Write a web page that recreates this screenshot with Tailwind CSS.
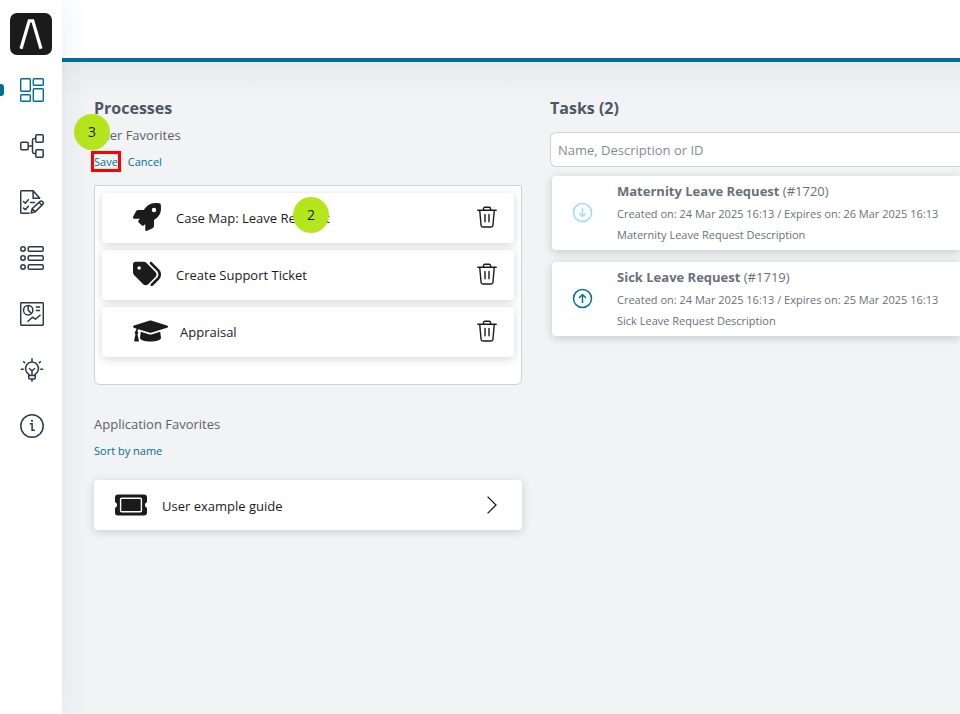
<!DOCTYPE html>
<html lang="en">
<head>
    <meta charset="UTF-8">
    <meta name="viewport" content="width=device-width, initial-scale=1.0">
    <title>Dashboard</title>
    <script src="https://cdn.jsdelivr.net/npm/@tailwindcss/browser@4"></script>
</head>
<body class="flex min-h-screen overflow-x-hidden bg-[#f2f3f5] font-['Open_Sans','Noto_Sans',sans-serif] text-[13px] text-[#1b1b1b]">
    <svg class="hidden">
        <symbol id="trash" viewBox="0 0 20 22">
            <g fill="none" stroke="currentColor" stroke-width="1.4" stroke-linecap="round" stroke-linejoin="round">
                <path d="M.8 4.2h18.4M2.7 4.2l1.4 15.3a1.6 1.6 0 0 0 1.6 1.5h8.6a1.6 1.6 0 0 0 1.6-1.5l1.4-15.3M6.5 4V2.6A1.3 1.3 0 0 1 7.8 1.3h4.4a1.3 1.3 0 0 1 1.3 1.3V4M8 8.5v7.3M12 8.5v7.3"/>
            </g>
        </symbol>
    </svg>

    <!-- Sidebar -->
    <nav class="z-10 flex w-[62px] shrink-0 flex-col items-center bg-white pt-[13px] shadow-[0_0_32px_rgba(30,70,110,0.09)]">
        <a href="#" aria-label="Home" class="mr-px mb-[23px] block">
            <svg class="size-[42px]" viewBox="0 0 42 42">
                <rect width="42" height="42" rx="7" fill="#1b1b1b"/>
                <path d="M11 35.7 19.200 7.800h3.600l8.200 27.900" fill="none" stroke="#fff" stroke-width="3.2"/>
            </svg>
        </a>
        <div class="flex w-full flex-col items-center gap-8 pl-[2px] text-[#2d3748]">
            <a href="#" aria-label="Dashboard" class="relative flex w-full justify-center text-[#006f94]">
                <span class="absolute top-1.5 -left-[2px] h-3 w-1 rounded-r-[3px] bg-[#006f94]"></span>
                <svg class="size-6" viewBox="0 0 24 24" fill="none" stroke="currentColor" stroke-width="1.4">
                    <rect x=".7" y=".7" width="9.6" height="12.6" rx=".8"/>
                    <rect x="13.3" y=".7" width="10" height="6.6" rx=".8"/>
                    <rect x=".7" y="16.7" width="9.6" height="6.6" rx=".8"/>
                    <rect x="13.3" y="10.7" width="10" height="12.6" rx=".8"/>
                </svg>
            </a>
            <a href="#" aria-label="Processes">
                <svg class="size-6" viewBox="0 0 24 24" fill="none" stroke="currentColor" stroke-width="1.5">
                    <rect x=".8" y="8.3" width="7.4" height="7.4" rx="1"/>
                    <rect x="15.8" y=".8" width="7.4" height="7.4" rx="1"/>
                    <rect x="15.8" y="15.8" width="7.4" height="7.4" rx="1"/>
                    <path d="M8.2 12h4.3M15.8 4.5h-1.6a1.7 1.7 0 0 0-1.7 1.7v11.6a1.7 1.7 0 0 0 1.7 1.7h1.6"/>
                </svg>
            </a>
            <a href="#" aria-label="Tasks">
                <svg class="size-6" viewBox="0 0 24 24" fill="none" stroke="currentColor" stroke-width="1.5" stroke-linejoin="round" stroke-linecap="round">
                    <path d="M9 23.2H1.7a1 1 0 0 1-1-1V1.7a1 1 0 0 1 1-1h11.4l6.6 7.6h-6.6V.7M3.500 11.500l1.800 1.800 3-3.600M3.500 18l1.800 1.800 3-3.600M10.500 12.500h4"/>
                    <path d="m11.2 23 .9-4.2 7.7-7.2a2 2 0 0 1 2.8.1 2 2 0 0 1 0 2.8l-7.5 7.4zM12.3 18.8l2.8 3M19 12.3l2.8 2.9"/>
                </svg>
            </a>
            <a href="#" aria-label="Cases">
                <svg class="size-6" viewBox="0 0 24 24" fill="none" stroke="currentColor" stroke-width="1.5">
                    <circle cx="3" cy="3" r="2.2"/><rect x="8.2" y=".8" width="15" height="4.4" rx="1.2"/>
                    <circle cx="3" cy="12" r="2.2"/><rect x="8.2" y="9.8" width="15" height="4.4" rx="1.2"/>
                    <circle cx="3" cy="21" r="2.2"/><rect x="8.2" y="18.8" width="15" height="4.4" rx="1.2"/>
                </svg>
            </a>
            <a href="#" aria-label="Statistics">
                <svg class="size-6" viewBox="0 0 24 24" fill="none" stroke="currentColor" stroke-width="1.5" stroke-linejoin="round">
                    <rect x=".7" y=".7" width="22.6" height="22.6" rx="1"/>
                    <circle cx="8.2" cy="8.2" r="4.7"/>
                    <path d="M8.2 3.5v4.7l3.4 3.4M15.8 5h4.4M15.8 8.5h4.4M7.5 19.8l5-4.6 3 2 5-4.4"/>
                </svg>
            </a>
            <a href="#" aria-label="Ideas">
                <svg class="size-6" viewBox="0 0 24 24" fill="none" stroke="currentColor" stroke-width="1.5">
                    <path d="M9 17.5v-1.200a6.500 6.500 0 1 1 6 0v1.200zM8.700 17.500h6.600v2.200a1.400 1.400 0 0 1-1.400 1.400h-3.800a1.400 1.400 0 0 1-1.400-1.400zM12 21v2.800M12 17.300v-4.800M9 10.200l3 2.600 3-2.600M12 .3v2.900M.8 11.200h3M20.200 11.200h3M3.200 3.200l1.900 2M20.800 3.200l-1.900 2"/>
                </svg>
            </a>
            <a href="#" aria-label="About">
                <svg class="size-6" viewBox="0 0 24 24" fill="none" stroke="currentColor" stroke-width="1.5">
                    <circle cx="12" cy="12" r="11.2"/>
                    <path d="M9.800 9.800h2.300v6.400h2.700"/>
                    <circle cx="12" cy="6.800" r="1.100" fill="currentColor" stroke="none"/>
                </svg>
            </a>
        </div>
    </nav>

    <div class="flex min-w-0 flex-1 flex-col">
        <header class="h-[62px] shrink-0 border-b-4 border-[#006f94] bg-white"></header>

        <main class="flex flex-1 gap-7 bg-linear-to-b from-[#e9ebee] to-[#f2f3f5] to-[40px] pt-8 pl-8">
            <!-- Processes -->
            <section class="w-[428px] shrink-0">
                <h2 class="text-base leading-7 font-bold text-[#4f5663]">Processes</h2>
                <div class="relative">
                    <h3 class="leading-[26px] text-[#5b616e]">User Favorites</h3>
                    <span class="absolute -top-2 -left-5 flex size-9 items-center justify-center rounded-full bg-[#b5e61d] text-sm">3</span>
                </div>
                <div class="flex h-7 items-center gap-[10px] pb-[2px] text-[11px] leading-[15px] text-[#006f94]">
                    <button type="button" class="outline-3 outline-[#ff0000]">Save</button>
                    <button type="button">Cancel</button>
                </div>

                <ul class="mt-[9px] flex flex-col gap-[7px] rounded-b-md border border-[#d0d2d6] bg-white px-[7px] pt-[7px] pb-[27px]">
                    <li class="relative flex h-[50px] items-center gap-3 rounded bg-white pr-[17px] pb-[2px] pl-[31px] shadow-[0_2px_10px_rgba(0,0,0,0.16)]">
                        <span class="min-w-[31px]">
                            <svg class="size-7" viewBox="0 0 512 512" fill="currentColor"><path d="M505.12 19.094c-1.19-5.531-6.658-11-12.207-12.188C460.716 0 435.507 0 410.407 0 307.175 0 245.27 55.203 199.052 128H94.838c-16.348.016-35.557 11.875-42.887 26.484L2.516 253.297A28.4 28.4 0 0 0 0 264a24 24 0 0 0 24.006 24h103.81l-22.474 22.469c-11.365 11.361-12.996 32.258 0 45.25l50.904 50.906c11.156 11.188 32.156 13.156 45.277 0l22.475-22.469V488a24 24 0 0 0 24.006 24 28.56 28.56 0 0 0 10.707-2.516l98.728-49.39c14.629-7.297 26.508-26.5 26.508-42.86V312.797c72.598-46.313 128.035-108.406 128.035-211.094.093-25.203.093-50.406-6.862-82.61zM384.04 168a40 40 0 1 1 40.01-40 40.023 40.023 0 0 1-40.01 40z"/></svg>
                        </span>
                        <span class="flex-1 pt-1">Case Map: Leave Request</span>
                        <button type="button" aria-label="Delete"><svg class="h-[22px] w-5"><use href="#trash"/></svg></button>
                        <span class="absolute top-1 left-[191px] flex size-9 items-center justify-center rounded-full bg-[#b5e61d] text-sm">2</span>
                    </li>
                    <li class="flex h-[50px] items-center gap-3 rounded bg-white pr-[17px] pb-[2px] pl-[31px] shadow-[0_2px_10px_rgba(0,0,0,0.16)]">
                        <span class="min-w-[31px]">
                            <svg class="size-7" viewBox="0 0 512 512" fill="currentColor"><path d="M345 39.1L472.8 168.4c52.4 53 52.4 138.2 0 191.2L360.8 472.9c-9.3 9.4-24.5 9.5-33.9 .2s-9.5-24.5-.2-33.9L438.6 325.9c33.9-34.3 33.9-89.4 0-123.7L310.9 72.9c-9.3-9.4-9.2-24.6 .2-33.9s24.6-9.2 33.9 .2zM0 229.5V80C0 53.5 21.5 32 48 32H197.5c17 0 33.3 6.7 45.3 18.7l168 168c25 25 25 65.5 0 90.5L277.3 442.7c-25 25-65.5 25-90.5 0l-168-168C6.7 262.7 0 246.5 0 229.5zM144 144a32 32 0 1 0 -64 0 32 32 0 1 0 64 0z"/></svg>
                        </span>
                        <span class="flex-1 pt-1">Create Support Ticket</span>
                        <button type="button" aria-label="Delete"><svg class="h-[22px] w-5"><use href="#trash"/></svg></button>
                    </li>
                    <li class="flex h-[50px] items-center gap-3 rounded bg-white pr-[17px] pb-[2px] pl-[31px] shadow-[0_2px_10px_rgba(0,0,0,0.16)]">
                        <span class="min-w-[31px]">
                            <svg class="h-7 w-[35px]" viewBox="0 0 640 512" fill="currentColor"><path d="M622.34 153.2L343.4 67.5c-15.2-4.67-31.6-4.67-46.79 0L17.66 153.2c-23.54 7.23-23.54 38.36 0 45.59l48.63 14.94c-10.67 13.19-17.23 29.28-17.88 46.9C38.78 266.15 32 276.11 32 288c0 10.78 5.68 19.85 13.86 25.65L20.33 428.53C18.11 438.52 25.71 448 35.94 448h56.11c10.24 0 17.84-9.48 15.62-19.47L82.14 313.65C90.32 307.85 96 298.78 96 288c0-11.57-6.47-21.25-15.66-26.87.76-15.02 8.44-28.3 20.69-36.72L296.6 284.5c9.06 2.78 26.44 6.25 46.79 0l278.95-85.7c23.55-7.24 23.55-38.36 0-45.6zM352.79 315.09c-28.53 8.76-52.84 3.92-65.59 0l-145.02-44.55L128 384c0 35.35 85.96 64 192 64s192-28.65 192-64l-14.18-113.47-145.03 44.56z"/></svg>
                        </span>
                        <span class="flex-1 pt-1">Appraisal</span>
                        <button type="button" aria-label="Delete"><svg class="h-[22px] w-5"><use href="#trash"/></svg></button>
                    </li>
                </ul>

                <h3 class="mt-[26px] leading-[26px] text-[#5b616e]">Application Favorites</h3>
                <div class="flex h-7 items-center pb-[2px] text-[11px] leading-[15px] text-[#006f94]">
                    <button type="button">Sort by name</button>
                </div>
                <a href="#" class="mt-[15px] flex h-[50px] items-center gap-3 rounded bg-white pr-[25px] pl-5 shadow-[0_2px_10px_rgba(0,0,0,0.16)]">
                    <svg class="h-[22px] w-9" viewBox="-1 0 36 22">
                        <path d="M3 .5h26a3 3 0 0 1 3 3V8a3.2 3.2 0 0 0 0 6v4.5a3 3 0 0 1-3 3H3a3 3 0 0 1-3-3V14a3.2 3.2 0 0 0 0-6V3.5a3 3 0 0 1 3-3z" fill="#1b1b1b"/>
                        <rect x="5.6" y="4.3" width="20.8" height="13.4" rx="1" fill="none" stroke="#fff" stroke-width="1.4"/>
                    </svg>
                    <span class="flex-1 pt-1">User example guide</span>
                    <svg class="h-[18px] w-[10px]" viewBox="0 0 10 18" fill="none" stroke="#1b1b1b" stroke-width="1.3"><path d="m.6.6 8.4 8.4-8.4 8.4"/></svg>
                </a>
            </section>

            <!-- Tasks -->
            <section class="min-w-0 flex-1 text-[#6a7079]">
                <h2 class="text-base leading-7 font-bold text-[#4f5663]">Tasks (2)</h2>
                <input type="text" aria-label="Search tasks" placeholder="Name, Description or ID"
                       class="mt-[10px] block h-[35px] w-full rounded-l-md border border-r-0 border-[#d0d2d6] bg-white px-[7px] placeholder:text-[#868b93]">
                <div class="mt-[9px] flex flex-col gap-3 pl-[2px]">
                    <article class="flex h-[74px] items-center rounded-l bg-white pb-[2px] pl-5 shadow-[0_2px_10px_rgba(0,0,0,0.18)]">
                        <svg class="mr-6 size-[21px] shrink-0 text-[#9be0ec]" viewBox="0 0 21 21" fill="none" stroke="currentColor" stroke-width="1.5"><circle cx="10.5" cy="10.5" r="9"/><path d="M10.5 6v8.5M7 11l3.5 3.5L14 11"/></svg>
                        <div class="text-[11px] leading-[21px] whitespace-nowrap">
                            <h4 class="text-[13px] leading-6"><b>Maternity Leave Request</b> (#1720)</h4>
                            <p>Created on: 24 Mar 2025 16:13 / Expires on: 26 Mar 2025 16:13</p>
                            <p>Maternity Leave Request Description</p>
                        </div>
                    </article>
                    <article class="flex h-[74px] items-center rounded-l bg-white pb-[2px] pl-5 shadow-[0_2px_10px_rgba(0,0,0,0.18)]">
                        <svg class="mr-6 size-[21px] shrink-0 text-[#00789c]" viewBox="0 0 21 21" fill="none" stroke="currentColor" stroke-width="1.5"><circle cx="10.5" cy="10.5" r="9"/><path d="M10.5 15V6.5M7 10l3.5-3.5L14 10"/></svg>
                        <div class="text-[11px] leading-[21px] whitespace-nowrap">
                            <h4 class="text-[13px] leading-6"><b>Sick Leave Request</b> (#1719)</h4>
                            <p>Created on: 24 Mar 2025 16:13 / Expires on: 25 Mar 2025 16:13</p>
                            <p>Sick Leave Request Description</p>
                        </div>
                    </article>
                </div>
            </section>
        </main>
    </div>
</body>
</html>
